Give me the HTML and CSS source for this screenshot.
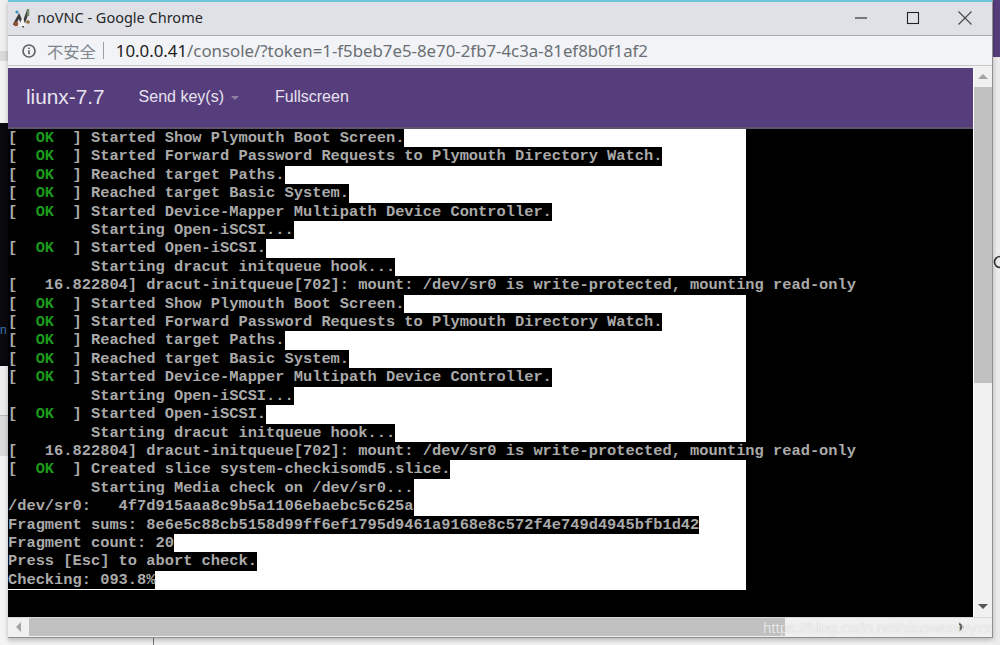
FILE: index.html
```html
<!DOCTYPE html>
<html lang="zh">
<head>
<meta charset="utf-8">
<title>noVNC - Google Chrome</title>
<link rel="stylesheet" href="styles.css">
</head>
<body>
<div class="backdrop-left">
  <div class="bl-top"></div>
  <div class="bl-band"></div>
  <div class="bl-mid"></div>
  <div class="bl-dark"><span class="bl-n">n</span></div>
  <div class="bl-low"></div>
  <div class="bl-rule"></div>
  <div class="bl-gray"></div>
  <div class="bl-end"></div>
</div>
<div class="backdrop-right">
  <div class="br-purple"></div>
  <div class="br-rest"><svg class="br-icon" width="7" height="16" viewBox="0 0 7 16"><path d="M7 2.500A5.500 5.500 0 0 0 7 13.500" fill="none" stroke="#333" stroke-width="1.6"/></svg></div>
</div>
<div class="backdrop-bottom"></div>
<main class="window">
  <header class="titlebar">
    <svg class="favicon" width="20" height="20" viewBox="0 0 20 20">
      <path d="M1 17 6 8l4 9 5-14" fill="none" stroke="#3a3a3a" stroke-width="2.6"/>
      <path d="M6 18 9.500 9l3.500 9" fill="#f4f4f4" stroke="none"/>
      <path d="M15 1v7" stroke="#6f8a66" stroke-width="2.4"/>
      <circle cx="4" cy="4" r="1.6" fill="#3a8fc4"/>
      <circle cx="3" cy="16" r="2.200" fill="#a04a30"/>
      <circle cx="15" cy="14" r="1.800" fill="#8a6a30"/>
    </svg>
    <span class="title">noVNC - Google Chrome</span>
    <div class="controls">
      <svg width="14" height="14" viewBox="0 0 14 14"><path d="M1 7H13" stroke="#5a5e64" stroke-width="1.6"/></svg>
      <svg width="14" height="14" viewBox="0 0 14 14"><rect x="1.5" y="1.5" width="11" height="11" fill="none" stroke="#222" stroke-width="1.1"/></svg>
      <svg width="14" height="14" viewBox="0 0 14 14"><path d="M.5.5 13.500 13.500M13.500.5.5 13.500" stroke="#444" stroke-width="1.1"/></svg>
    </div>
  </header>
  <div class="addressbar">
    <svg class="info" width="16" height="16" viewBox="0 0 16 16"><circle cx="8" cy="8" r="6" fill="none" stroke="#5f6368" stroke-width="1.7"/><path d="M8 7.200v4M8 4.500v1.500" stroke="#5f6368" stroke-width="1.700"/></svg>
    <span class="insecure">不安全</span>
    <span class="sep"></span>
    <span class="url"><span class="host">10.0.0.41</span>/console/?token=1-f5beb7e5-8e70-2fb7-4c3a-81ef8b0f1af2</span>
  </div>
  <div class="page">
    <div class="page-main">
      <nav class="navbar">
        <span class="brand">liunx-7.7</span>
        <span class="navlink">Send key(s)<i class="caret"></i></span>
        <span class="navlink">Fullscreen</span>
      </nav>
      <div class="console">
        <div class="screen">
          <div class="row"><span>[  <b>OK</b>  ] Started Show Plymouth Boot Screen.</span></div>
          <div class="row"><span>[  <b>OK</b>  ] Started Forward Password Requests to Plymouth Directory Watch.</span></div>
          <div class="row"><span>[  <b>OK</b>  ] Reached target Paths.</span></div>
          <div class="row"><span>[  <b>OK</b>  ] Reached target Basic System.</span></div>
          <div class="row"><span>[  <b>OK</b>  ] Started Device-Mapper Multipath Device Controller.</span></div>
          <div class="row"><span>         Starting Open-iSCSI...</span></div>
          <div class="row"><span>[  <b>OK</b>  ] Started Open-iSCSI.</span></div>
          <div class="row"><span>         Starting dracut initqueue hook...</span></div>
          <div class="row"><span>[   16.822804] dracut-initqueue[702]: mount: /dev/sr0 is write-protected, mounting read-only</span></div>
          <div class="row"><span>[  <b>OK</b>  ] Started Show Plymouth Boot Screen.</span></div>
          <div class="row"><span>[  <b>OK</b>  ] Started Forward Password Requests to Plymouth Directory Watch.</span></div>
          <div class="row"><span>[  <b>OK</b>  ] Reached target Paths.</span></div>
          <div class="row"><span>[  <b>OK</b>  ] Reached target Basic System.</span></div>
          <div class="row"><span>[  <b>OK</b>  ] Started Device-Mapper Multipath Device Controller.</span></div>
          <div class="row"><span>         Starting Open-iSCSI...</span></div>
          <div class="row"><span>[  <b>OK</b>  ] Started Open-iSCSI.</span></div>
          <div class="row"><span>         Starting dracut initqueue hook...</span></div>
          <div class="row"><span>[   16.822804] dracut-initqueue[702]: mount: /dev/sr0 is write-protected, mounting read-only</span></div>
          <div class="row"><span>[  <b>OK</b>  ] Created slice system-checkisomd5.slice.</span></div>
          <div class="row"><span>         Starting Media check on /dev/sr0...</span></div>
          <div class="row"><span>/dev/sr0:   4f7d915aaa8c9b5a1106ebaebc5c625a</span></div>
          <div class="row"><span>Fragment sums: 8e6e5c88cb5158d99ff6ef1795d9461a9168e8c572f4e749d4945bfb1d42</span></div>
          <div class="row"><span>Fragment count: 20</span></div>
          <div class="row"><span>Press [Esc] to abort check.</span></div>
          <div class="row"><span>Checking: 093.8%</span></div>
        </div>
      </div>
    </div>
    <div class="vscroll">
      <div class="arrow-box"><i class="tri-up"></i></div>
      <div class="vthumb"></div>
      <div class="vtrack"></div>
      <div class="arrow-box"><i class="tri-down"></i></div>
    </div>
  </div>
  <div class="hscroll">
    <div class="harrow"><i class="tri-left"></i></div>
    <div class="hthumb"></div>
    <div class="htrack"><i class="tri-right"></i></div>
  </div>
  <div class="watermark">https://blog.csdn.net/xiaowoniuyzx</div>
</main>
</body>
</html>
```
FILE: styles.css
```css
* { box-sizing: border-box; }
html, body { margin: 0; height: 645px; width: 1000px; overflow: hidden; }
body { background: #f1f1f1; font-family: "Liberation Sans", sans-serif; position: relative; }

.backdrop-left { position: absolute; left: 0; top: 0; width: 8px; height: 645px; display: flex; flex-direction: column; }
.bl-top { height: 51px; flex: none; background: #f0f0f0; }
.bl-band { height: 10px; flex: none; background: #d9d9d9; }
.bl-mid { height: 62px; flex: none; background: #f2f2f2; }
.bl-dark { height: 243px; flex: none; background: #0a0a0e; overflow: hidden; padding-top: 197px; }
.bl-n { color: #3a78b0; font-size: 12px; }
.bl-low { height: 49px; flex: none; background: #ededed; }
.bl-rule { height: 1px; flex: none; background: #bbb; }
.bl-gray { height: 40px; flex: none; background: #dcdcdc; }
.bl-end { flex: 1; background: #f4f4f4; }
.backdrop-right { position: absolute; right: 0; top: 0; width: 7px; height: 645px; display: flex; flex-direction: column; }
.br-purple { height: 57px; flex: none; background: #563d7c; }
.br-rest { flex: 1; background: #ececec; padding-top: 197px; }
.br-icon { display: block; }
.backdrop-bottom { position: absolute; left: 153px; top: 638px; width: 1px; height: 7px; background: #777; }

.window { position: absolute; left: 8px; top: 0; width: 985px; height: 638px; border-top: 2px solid #6cc8d8; border-right: 1px solid #8f8f8f; border-bottom: 1px solid #8f8f8f; box-shadow: 0 2px 5px rgba(0,0,0,.25); background: #f0f0f0; display: flex; flex-direction: column; overflow: hidden; }

.titlebar { height: 34px; flex: none; background: #dfe1e6; border-bottom: 1px solid #a9abae; display: flex; align-items: center; padding-left: 5px; }
.favicon { flex: none; margin-bottom: 2px; }
.title { margin-left: 4px; margin-bottom: 3px; font-size: 14.500px; color: #26282b; font-family: "Noto Sans", "Liberation Sans", sans-serif; }
.controls { margin-left: auto; margin-right: 20px; display: flex; gap: 38px; margin-bottom: 2px; }

.addressbar { height: 30px; flex: none; background: #f1f3f6; border-bottom: 1px solid #c8c8c8; display: flex; align-items: center; padding-left: 13px; }
.info { flex: none; }
.insecure { margin-left: 10px; font-size: 16.300px; color: #80868b; font-family: "Noto Sans CJK SC", sans-serif; }
.sep { width: 1px; height: 17px; background: #9aa0a6; margin: 0 12px 0 7px; }
.url { font-size: 16.820px; color: #6b6f74; font-family: "Noto Sans", "Liberation Sans", sans-serif; }
.host { color: #222; }

.page { flex: none; height: 549px; margin-top: 2px; display: flex; background: #fff; }
.page-main { width: 965px; flex: none; }
.navbar { height: 61px; background: #563d7c; border-bottom: 2px solid #5f5470; display: flex; align-items: center; padding: 0 0 2px 18px; color: #e8e3f0; }
.brand { font-size: 20.800px; margin-right: 34px; }
.navlink { font-size: 16px; margin-right: 36px; display: flex; align-items: center; }
.caret { width: 0; height: 0; margin-left: 7px; margin-top: 2px; border-left: 4.500px solid transparent; border-right: 4.500px solid transparent; border-top: 4.500px solid #8d7fa6; }

.console { height: 488px; background: #000; }
.screen { width: 738px; height: 461px; background: #fff; font-family: "Liberation Mono", "DejaVu Sans Mono", monospace; font-size: 15.370px; font-weight: 700; color: #aaa; }
.row { height: 18.420px; line-height: 18.420px; white-space: pre; }
.row span { display: inline-block; height: 100%; background: #000; }
.row b { font-weight: 700; color: #1c9a1c; }

.vscroll { width: 18px; margin-left: 1px; flex: none; background: #f0f0f0; display: flex; flex-direction: column; margin-top: -2px; }
.arrow-box { height: 21px; flex: none; display: flex; align-items: center; justify-content: center; }
.tri-up { border-left: 5px solid transparent; border-right: 5px solid transparent; border-bottom: 5px solid #a3a3a3; }
.tri-down { border-left: 5px solid transparent; border-right: 5px solid transparent; border-top: 5px solid #555; }
.vthumb { height: 296px; flex: none; background: #c1c1c1; }
.vtrack { flex: 1; }

.hscroll { height: 19px; flex: none; background: #f0f0f0; border-top: 1px solid #d8d8d8; display: flex; }
.harrow { width: 21px; flex: none; display: flex; align-items: center; justify-content: center; }
.tri-left { border-top: 5px solid transparent; border-bottom: 5px solid transparent; border-right: 5px solid #a3a3a3; }
.hthumb { width: 756px; flex: none; background: #c1c1c1; }
.htrack { flex: 1; display: flex; align-items: center; justify-content: flex-end; padding-right: 28px; }
.tri-right { border-top: 5px solid transparent; border-bottom: 5px solid transparent; border-left: 5px solid #555; }

.watermark { position: absolute; right: 0; bottom: 1px; font-size: 15.100px; color: rgba(255,255,255,.72); font-family: "Liberation Sans", sans-serif; text-shadow: 0 0 1px rgba(150,150,150,.5); white-space: nowrap; }
```
